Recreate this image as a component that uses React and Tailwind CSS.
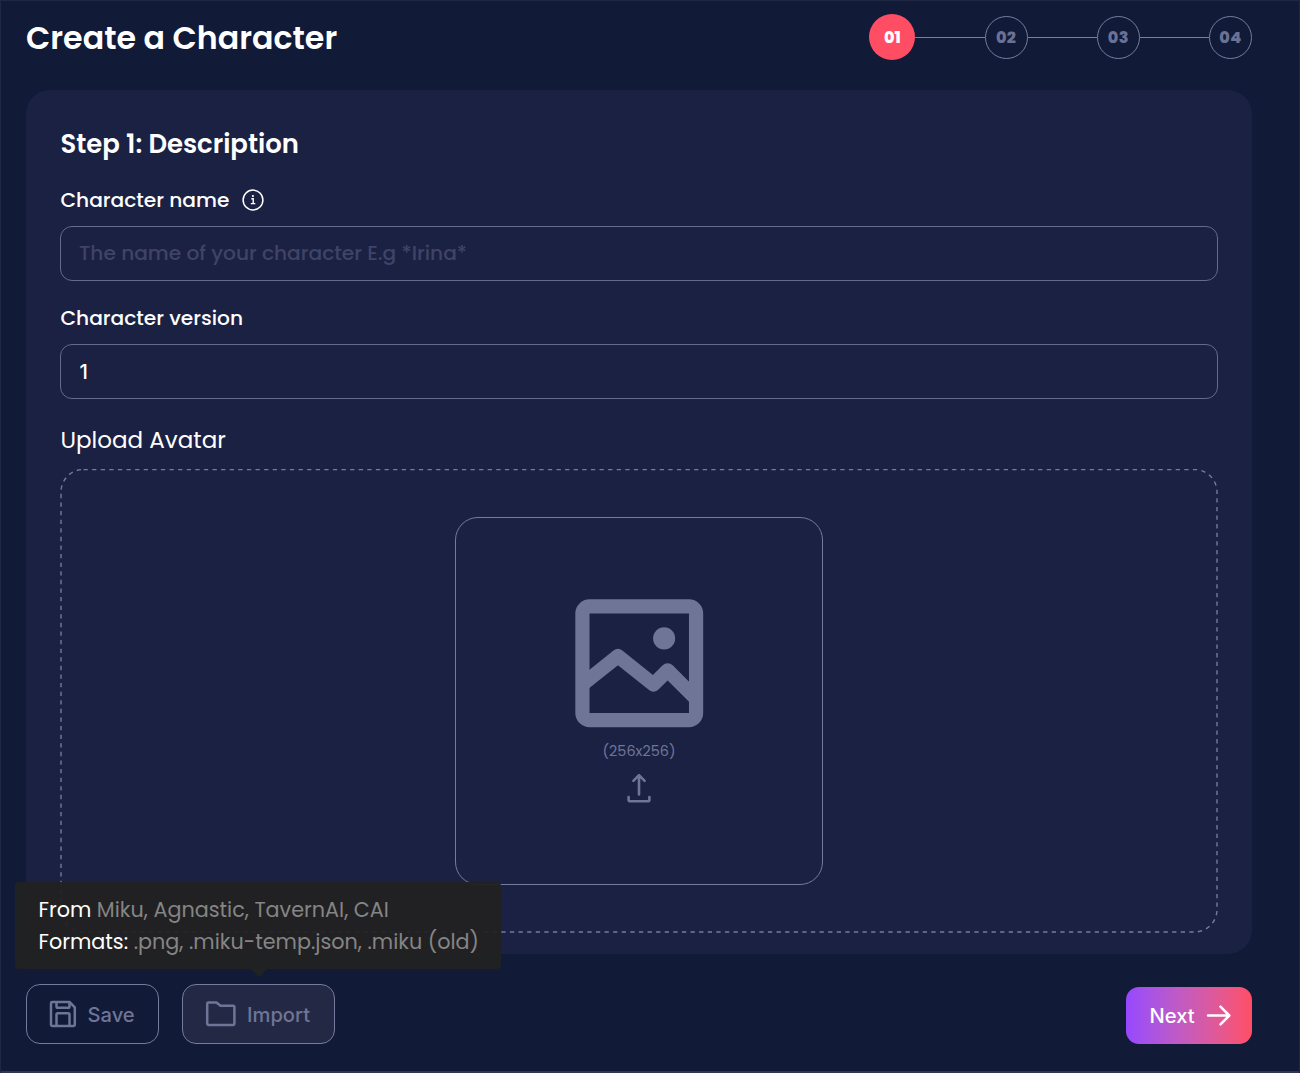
import React from "react";

const steps = ["01", "02", "03", "04"];

function Stepper() {
  return (
    <div className="flex items-center -mt-[0.6px]">
      {steps.map((s, i) => (
        <React.Fragment key={s}>
          {i > 0 && <div className="w-[69.2px] h-px bg-[#777d9f]" />}
          <div
            className={
              i === 0
                ? "w-[46px] h-[46px] rounded-full bg-[#ff4e64] text-white flex items-center justify-center text-[16px] pt-px font-extrabold"
                : "w-[43px] h-[43px] rounded-full border border-[#777d9f] text-[#6b7195] flex items-center justify-center text-[16px] pt-px font-extrabold tracking-[0.4px]"
            }
          >
            {s}
          </div>
        </React.Fragment>
      ))}
    </div>
  );
}

export default function App() {
  return (
    <div className="relative w-[1300px] h-[1073px] overflow-hidden bg-[#111a36] border-t border-l border-[#1f2843] text-white font-['Poppins',sans-serif]">
      <header className="flex justify-between items-start pl-[25px] pr-[48px] pt-[14px] h-[89px]">
        <h1 className="text-[31.68px] leading-[47px] font-semibold whitespace-nowrap">Create a Character</h1>
        <Stepper />
      </header>

      <main className="ml-[25px] w-[1226px] h-[864px] rounded-[24px] bg-[#1b2143] px-[34px] pt-[34px]">
        <h2 className="pl-[0.5px] text-[25.92px] leading-[40px] font-semibold whitespace-nowrap">Step 1: Description</h2>
        <div className="flex items-center mt-[20px] h-[32px] pl-[0.5px]">
          <label className="text-[20.16px] leading-[32px] font-medium whitespace-nowrap">Character name</label>
          <svg className="ml-[12.5px]" width="22" height="22" viewBox="0 0 22 22" fill="none" stroke="#fff">
            <circle cx="11" cy="11" r="9.9" strokeWidth="1.5" />
            <path d="M9.3 9.8h1.900v4.800M8.800 14.600h4.500" strokeWidth="1.4" />
            <circle cx="10.9" cy="7" r="1.1" fill="#fff" stroke="none" />
          </svg>
        </div>
        <div className="mt-[10px] h-[55px] rounded-[12px] border border-[#646a90] flex items-center px-[18px] text-[20.16px] font-medium text-[#3f4467] whitespace-nowrap">
          The name of your character E.g *Irina*
        </div>
        <label className="block mt-[21px] pl-[0.5px] text-[20.16px] leading-[32px] font-medium whitespace-nowrap">Character version</label>
        <div className="mt-[10px] h-[55px] rounded-[12px] border border-[#646a90] flex items-center px-[18.5px] pt-[2px] text-[20.16px] font-medium font-['Inter',sans-serif]">1</div>
        <div className="mt-[23px] pl-[0.5px] text-[23.04px] leading-[36px] whitespace-nowrap">Upload Avatar</div>

        <div className="relative mt-[11px] h-[464px] pt-[48px] flex justify-center items-start">
          <svg className="absolute inset-0" width="1158" height="464" fill="none">
            <rect x="1" y="0.5" width="1156" height="462.500" rx="22.5" stroke="#757b9d" strokeWidth="1.4" strokeDasharray="4.3 4.3" />
          </svg>
          <div className="w-[368px] h-[368px] rounded-[23px] border border-[#757b9d] flex flex-col items-center text-[#6f7597]">
            <svg className="mt-[60px]" width="170.500" height="170.500" viewBox="0 0 24 24" fill="none" stroke="currentColor" strokeWidth="2" strokeLinejoin="round">
              <rect x="4" y="4" width="16" height="16" rx="1" />
              <path d="M4 15l5-4 5 4 2-2 4 4" />
              <circle cx="15.5" cy="8.5" r="1.55" fill="currentColor" stroke="none" />
            </svg>
            <span className="-mt-[10px] text-[14.4px] leading-[24px] whitespace-nowrap">(256x256)</span>
            <svg className="mt-[9.5px]" width="26" height="32" viewBox="0 0 26 32" fill="none" stroke="currentColor" strokeWidth="2.600" strokeLinecap="round" strokeLinejoin="round">
              <path d="M13 22.500V3.200M7.400 8.800L13 3.200l5.600 5.600M2.600 25v3.200c0 .6.5 1.100 1.100 1.100h18.600c.6 0 1.100-.5 1.100-1.100V25" />
            </svg>
          </div>
        </div>
      </main>

      <footer className="flex items-start pl-[25px] pr-[48px] pt-[30px] font-['Inter',sans-serif] font-medium text-[20.16px]">
        <button className="w-[133px] h-[60px] rounded-[14px] border border-[#757b9d] text-[#6f7597] flex items-center pl-[22px]">
          <svg width="28" height="28" viewBox="0 0 28 28" fill="none" stroke="currentColor" strokeWidth="2.500" strokeLinejoin="round">
            <path d="M2 3.200C2 2.500 2.500 2 3.200 2H20.500l5.300 5.300V24.800c0 .7-.5 1.200-1.200 1.200H3.200c-.7 0-1.200-.5-1.200-1.200z" />
            <path d="M7.500 2v4.500c0 .8.5 1.300 1.300 1.300h10.400c.8 0 1.300-.5 1.300-1.300V2M7.500 26V14.500c0-.8.5-1.300 1.300-1.300h10.400c.8 0 1.300.5 1.300 1.300V26" />
          </svg>
          <span className="ml-[10.5px] pt-[2px]">Save</span>
        </button>
        <div className="relative ml-[23px]">
          <button className="w-[153px] h-[60px] rounded-[14px] border border-[#757b9d] bg-[#232945] text-[#6f7597] flex items-center pl-[22px]">
            <svg width="32" height="28" viewBox="0 0 32 28" fill="none" stroke="currentColor" strokeWidth="2.500" strokeLinejoin="round">
              <path d="M2.200 3.800c0-.7.5-1.200 1.200-1.200h8l4.200 3.200h12.600c.8 0 1.200.4 1.200 1.200v16.700c0 .7-.5 1.200-1.200 1.200H3.400c-.7 0-1.200-.5-1.200-1.200z" />
            </svg>
            <span className="ml-[10px] pt-[2px]">Import</span>
          </button>
          <div className="absolute left-[-167px] bottom-[75px] w-[486px] h-[87px] rounded-[4px] bg-[#222]/95 px-[23.5px] pt-[12px] font-['Poppins',sans-serif] font-normal text-[20.74px] leading-[32px] whitespace-nowrap text-[#858585]">
            <div><span className="text-white">From</span> <span>Miku, Agnastic, TavernAI, CAI</span></div>
            <div><span className="text-white">Formats:</span> <span>.png, .miku-temp.json, .miku (old)</span></div>
            <div className="absolute left-[235.5px] top-full border-x-[8px] border-t-[8px] border-x-transparent border-t-[#222]" />
          </div>
        </div>
        <button className="ml-auto mt-[3px] w-[126px] h-[57px] rounded-[13px] bg-linear-to-r from-[#9747ff] to-[#ff4e64] flex items-center pl-[23.5px]">
          <span className="pt-px">Next</span>
          <svg className="ml-[11px]" width="26" height="24" viewBox="0 0 26 24" fill="none" stroke="#fff" strokeWidth="2.500" strokeLinecap="round" strokeLinejoin="round">
            <path d="M2 11.500h21M14.500 2.700L23.300 11.500l-8.800 8.800" />
          </svg>
        </button>
      </footer>
      <div className="absolute inset-x-0 bottom-0 h-[2px] bg-[#2e3650]" />
      <div className="absolute inset-y-0 right-0 w-px bg-[#1f2843]" />
    </div>
  );
}
